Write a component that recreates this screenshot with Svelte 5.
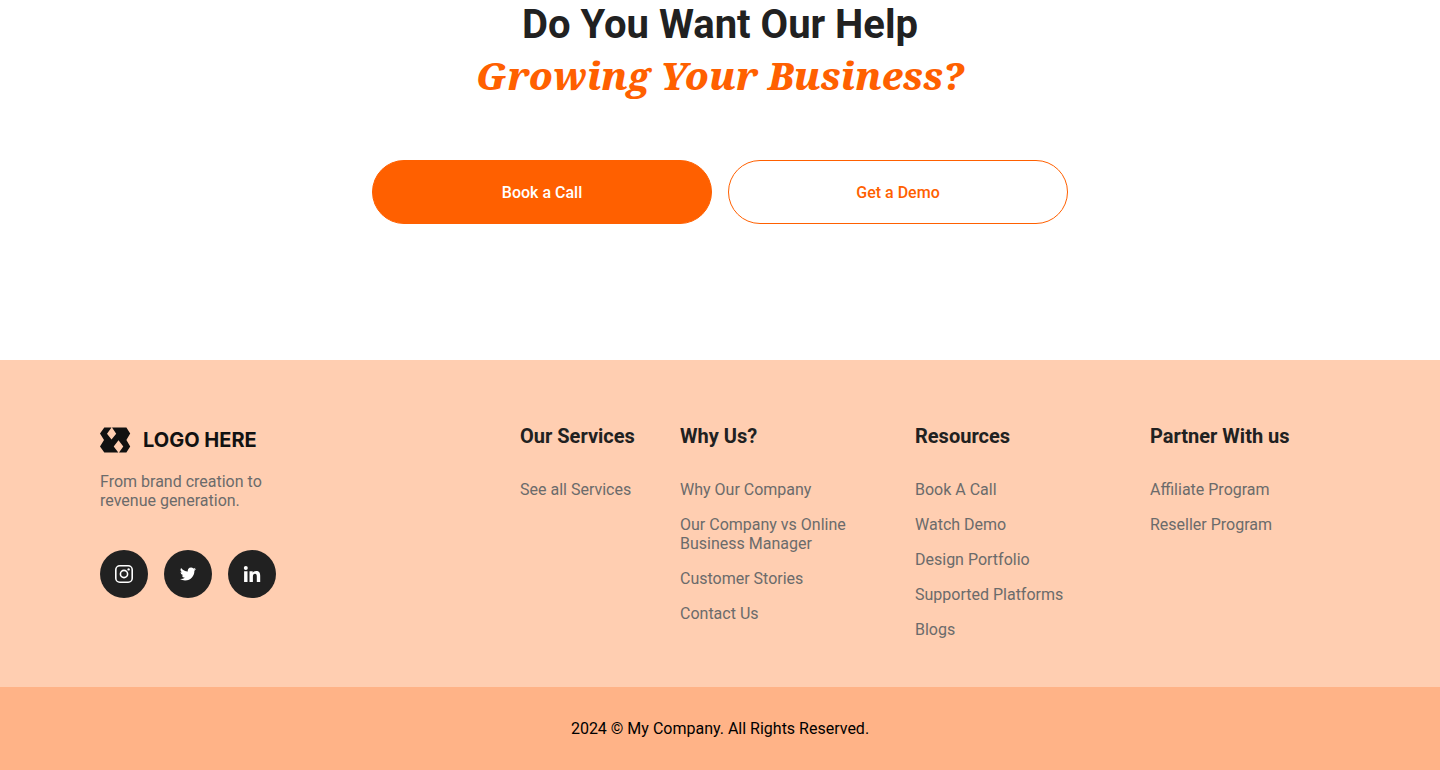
<script>
  const columns = [
    { title: 'Our Services', links: ['See all Services'] },
    { title: 'Why Us?', links: ['Why Our Company', 'Our Company vs Online Business Manager', 'Customer Stories', 'Contact Us'] },
    { title: 'Resources', links: ['Book A Call', 'Watch Demo', 'Design Portfolio', 'Supported Platforms', 'Blogs'] },
    { title: 'Partner With us', links: ['Affiliate Program', 'Reseller Program'] }
  ];
</script>

<main>
  <h1>Do You Want Our Help <em>Growing Your Business?</em></h1>
  <div class="actions">
    <button class="primary" type="button">Book a Call</button>
    <button class="outline" type="button">Get a Demo</button>
  </div>
</main>
<footer>
  <div class="top">
    <section class="brand">
      <a class="logo" href="#home">
        <svg width="31" height="26" viewBox="0 0 31 26" aria-hidden="true">
          <path fill="#111" fill-rule="evenodd" d="M4.300.5H26.400L30.200 6.600 26.400 13 30.200 19.400 26.400 25.500H4.300L0 19.400 4 13 0 6.600ZM11.500.6 7 6.700 11.500 12.600 16.200 6.700 12 .6ZM18.500 13.200 13.700 19.400 18.300 25.400H19L23.300 19.400Z"/>
        </svg>
        <span>LOGO HERE</span>
      </a>
      <p>From brand creation to revenue generation.</p>
      <div class="social">
        <a href="#instagram" aria-label="Instagram">
          <svg width="24" height="24" viewBox="0 0 24 24" fill="none" stroke="#fff" stroke-width="1.600">
            <rect x="3.800" y="3.800" width="16.400" height="16.400" rx="4"/>
            <circle cx="12" cy="12" r="3.600"/>
            <circle cx="16.600" cy="7.400" r="1.200" fill="#fff" stroke="none"/>
          </svg>
        </a>
        <a href="#twitter" aria-label="Twitter">
          <svg width="16" height="16" viewBox="0 0 24 24" fill="#fff"><path d="M23.950 4.570a10 10 0 0 1-2.820.77 4.960 4.960 0 0 0 2.160-2.720 9.900 9.900 0 0 1-3.120 1.180 4.920 4.920 0 0 0-8.390 4.490A13.980 13.980 0 0 1 1.640 3.160a4.920 4.920 0 0 0 1.520 6.570 4.900 4.900 0 0 1-2.230-.61v.06a4.920 4.920 0 0 0 3.950 4.830 5 5 0 0 1-2.210.08 4.940 4.940 0 0 0 4.600 3.420A9.870 9.870 0 0 1 0 19.540a14 14 0 0 0 7.550 2.210c9.050 0 14-7.500 14-13.980 0-.21 0-.42-.02-.63a9.940 9.940 0 0 0 2.420-2.570Z"/></svg>
        </a>
        <a href="#linkedin" aria-label="LinkedIn">
          <svg width="24" height="24" viewBox="0 0 24 24" fill="#fff"><circle cx="5.800" cy="6" r="2"/><path d="M4.100 9.300h3.400V20H4.100ZM9.500 9.300h3.200v1.500c.6-1.100 1.800-1.800 3.400-1.800 3.100 0 4.100 1.900 4.100 4.800V20h-3.400v-5.600c0-1.500-.4-2.600-1.800-2.600s-2.100 1.100-2.100 2.600V20H9.500Z"/></svg>
        </a>
      </div>
    </section>
    <nav aria-label="Footer">
      {#each columns as column}
        <section>
          <h2>{column.title}</h2>
          <ul>
            {#each column.links as link}
              <li><a href="#top">{link}</a></li>
            {/each}
          </ul>
        </section>
      {/each}
    </nav>
  </div>
  <div class="legal">2024 © My Company. All Rights Reserved.</div>
</footer>

<style>
  :global(body) { margin: 0; font-family: Roboto, sans-serif; color: #212121; background: #fff; }
  main { padding: 0 24px 136px; }
  h1 { margin: 0; font-size: 40px; line-height: 50px; font-weight: 700; text-align: center; }
  em { display: block; color: #ff6000; font-family: "Noto Serif", "DejaVu Serif", "Liberation Serif", serif; font-size: 38px; font-weight: 800; }
  .actions { display: flex; flex-wrap: wrap; justify-content: center; gap: 16px; margin-top: 60px; }
  button { width: 340px; height: 64px; border: 1px solid #ff6000; border-radius: 32px; font: 500 16px/19px Roboto, sans-serif; cursor: pointer; }
  .primary { background: #ff6000; color: #fff; }
  .outline { background: #fff; color: #ff6000; }
  .top { display: flex; justify-content: space-between; background: #ffceb1; padding: 64px 100px 48px; }
  a { color: inherit; text-decoration: none; }
  .logo { display: flex; align-items: center; gap: 12px; height: 32px; color: #111; font: 700 20px/24px Inter, sans-serif; }
  .brand p { width: 180px; margin: 16px 0 40px; font-size: 16px; line-height: 19px; color: #6b6b6b; }
  .social { display: flex; gap: 16px; }
  .social a { display: grid; place-items: center; width: 48px; height: 48px; border-radius: 50%; background: #212121; }
  nav { display: grid; grid-template-columns: 120px 195px 195px 190px; gap: 40px; }
  h2 { margin: 0; font-size: 20px; line-height: 24px; font-weight: 700; }
  ul { list-style: none; margin: 32px 0 0; padding: 0; display: grid; gap: 16px; font-size: 16px; line-height: 19px; color: #6b6b6b; }
  .legal { background: #ffb387; padding: 32px 24px; text-align: center; font-size: 16px; line-height: 19px; color: #000; }
</style>
